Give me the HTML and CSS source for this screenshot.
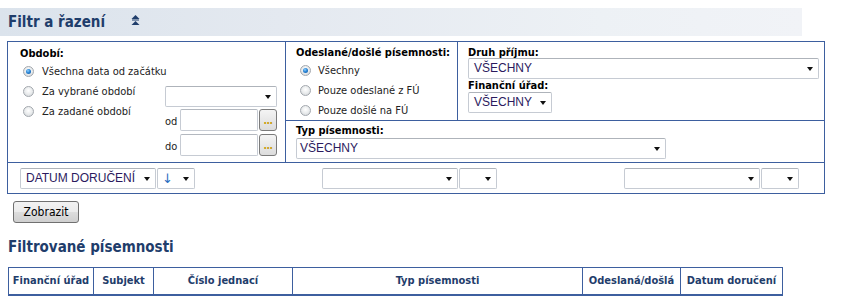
FILE: index.html
```html
<!DOCTYPE html>
<html lang="cs">
<head>
<meta charset="utf-8">
<title>Filtr a řazení</title>
<link rel="stylesheet" href="styles.css">
</head>
<body>
<div class="hdr">
  <span class="hdr-title">Filtr a řazení</span>
  <svg class="hdr-icon" width="9" height="11" viewBox="0 0 9 11"><polygon points="0.5,4 4.5,0 8.5,4" fill="#1f3d6b"/><rect x="1" y="4.5" width="7" height="1" fill="#1f3d6b"/><polygon points="0.5,10 4.5,6 8.5,10" fill="#1f3d6b"/></svg>
</div>

<div class="filter">
  <div class="c-period">
    <div class="lbl">Období:</div>
    <div class="period-body">
      <div class="radios">
        <div class="rrow"><span class="radio on"></span><span>Všechna data od začátku</span></div>
        <div class="rrow"><span class="radio"></span><span>Za vybrané období</span></div>
        <div class="rrow"><span class="radio"></span><span>Za zadané období</span></div>
      </div>
      <div class="period-ctrls">
        <div class="sel sel-period"><span class="sel-t"></span><i class="arr"></i></div>
        <div class="dt dt-od"><span class="dt-l">od</span><span class="inp"></span><span class="dots">...</span></div>
        <div class="dt dt-do"><span class="dt-l">do</span><span class="inp"></span><span class="dots">...</span></div>
      </div>
    </div>
  </div>

  <div class="c-dir">
    <div class="lbl">Odeslané/došlé písemnosti:</div>
    <div class="rrow r2"><span class="radio on"></span><span>Všechny</span></div>
    <div class="rrow r2"><span class="radio"></span><span>Pouze odeslané z FÚ</span></div>
    <div class="rrow r2"><span class="radio"></span><span>Pouze došlé na FÚ</span></div>
  </div>

  <div class="c-right">
    <div class="lbl lbl-s">Druh příjmu:</div>
    <div class="sel sel-druh"><span class="sel-t">VŠECHNY</span><i class="arr"></i></div>
    <div class="lbl lbl-s lbl-fu">Finanční úřad:</div>
    <div class="sel sel-fu"><span class="sel-t">VŠECHNY</span><i class="arr"></i></div>
  </div>

  <div class="c-typ">
    <div class="lbl lbl-s">Typ písemnosti:</div>
    <div class="sel sel-typ"><span class="sel-t">VŠECHNY</span><i class="arr"></i></div>
  </div>

  <div class="c-sort">
    <div class="sgroup">
      <div class="sel sel-field"><span class="sel-t">DATUM DORUČENÍ</span><i class="arr"></i></div>
      <div class="sel sel-dir"><span class="sel-t dir-t">↓</span><i class="arr"></i></div>
    </div>
    <div class="sgroup">
      <div class="sel sel-field"><span class="sel-t"></span><i class="arr"></i></div>
      <div class="sel sel-dir"><span class="sel-t"></span><i class="arr"></i></div>
    </div>
    <div class="sgroup">
      <div class="sel sel-field"><span class="sel-t"></span><i class="arr"></i></div>
      <div class="sel sel-dir"><span class="sel-t"></span><i class="arr"></i></div>
    </div>
  </div>
</div>

<button class="btn" type="button">Zobrazit</button>

<h2 class="sec">Filtrované písemnosti</h2>

<table class="grid">
  <colgroup>
    <col class="w1"><col class="w2"><col class="w3"><col class="w4"><col class="w5"><col class="w6">
  </colgroup>
  <thead>
    <tr><th>Finanční úřad</th><th>Subjekt</th><th>Číslo jednací</th><th>Typ písemnosti</th><th>Odeslaná/došlá</th><th>Datum doručení</th></tr>
  </thead>
  <tbody>
    <tr><td></td><td></td><td></td><td></td><td></td><td></td></tr>
  </tbody>
</table>
</body>
</html>
```

FILE: styles.css
```css
* { box-sizing: border-box; }
html, body { margin: 0; padding: 0; background: #fff; }
body {
  font-family: "DejaVu Sans Condensed", "DejaVu Sans", sans-serif;
  font-size: 11px;
  color: #1a1a1a;
  overflow: hidden;
}

/* header bar */
.hdr {
  margin-top: 8px;
  width: 802px;
  height: 28px;
  display: flex;
  align-items: center;
  background: linear-gradient(to right, #dbe3ec 0%, #e4e9f0 35%, #edf1f5 75%, #f1f3f7 100%);
}
.hdr-title {
  width: 131px;
  padding-left: 8px;
  font-size: 15px;
  font-weight: bold;
  color: #1f3d6b;
  line-height: 28px;
  white-space: nowrap;
}
.hdr-icon { display: block; margin-top: -3px; }

/* filter box */
.filter {
  margin: 5px 0 0 7px;
  width: 818px;
  border: 1px solid #3d5f9f;
  display: grid;
  grid-template-columns: 278px 172px 366px;
  grid-template-rows: 79px 41px 31px;
}
.c-period {
  grid-row: 1 / 3;
  grid-column: 1;
  border-right: 1px solid #3d5f9f;
  padding: 5px 0 0 12px;
}
.c-dir {
  grid-row: 1;
  grid-column: 2;
  border-right: 1px solid #3d5f9f;
  border-bottom: 1px solid #3d5f9f;
  padding: 4px 0 0 10px;
}
.c-right {
  grid-row: 1;
  grid-column: 3;
  border-bottom: 1px solid #3d5f9f;
  padding: 5px 0 0 10px;
}
.c-typ {
  grid-row: 2;
  grid-column: 2 / 4;
  padding: 4px 0 0 10px;
}
.c-sort {
  grid-row: 3;
  grid-column: 1 / 4;
  border-top: 1px solid #3d5f9f;
  padding: 5px 0 0 12px;
  display: flex;
  gap: 127px;
}

.lbl {
  font-weight: bold;
  color: #000;
  line-height: 14px;
  white-space: nowrap;
}
.lbl-s { line-height: 12px; }
.lbl-fu { margin-top: 1px; }

/* radios */
.period-body { display: flex; }
.radios { width: 145px; }
.rrow {
  height: 20px;
  display: flex;
  align-items: center;
  padding-left: 3px;
  gap: 8px;
  color: #222;
  white-space: nowrap;
}
.rrow.r2 { padding-left: 4px; gap: 7px; }
.radio {
  flex: none;
  width: 11px;
  height: 11px;
  border-radius: 50%;
  border: 1px solid #a3a8ae;
  background: radial-gradient(circle at 50% 40%, #ffffff 0%, #eceeef 45%, #cfd3d7 100%);
  position: relative;
}
.radio.on::after {
  content: "";
  position: absolute;
  left: 2px;
  top: 2px;
  width: 5px;
  height: 5px;
  border-radius: 50%;
  background: radial-gradient(circle at 40% 35%, #8fd0ff 0%, #2a86d6 45%, #0d4f9c 100%);
}

/* selects */
.sel {
  position: relative;
  height: 21px;
  border: 1px solid #c6cbd3;
  border-top-color: #aeb3ba;
  border-radius: 2px;
  background: #fff;
  font-family: "Liberation Sans", Arial, sans-serif;
  font-size: 12px;
  color: #2b1a5e;
}
.sel-t {
  display: block;
  padding-left: 5px;
  line-height: 19px;
  white-space: nowrap;
}
.arr {
  position: absolute;
  right: 5px;
  top: 8px;
  width: 0;
  height: 0;
  border-left: 3.5px solid transparent;
  border-right: 3.5px solid transparent;
  border-top: 4px solid #111;
}
.sel-period { width: 112px; margin-top: 25px; }
.sel-druh { width: 351px; margin-top: -1px; }
.sel-fu { width: 84px; }
.sel-typ { width: 370px; margin-top: 1px; }
.sel-typ .sel-t { padding-left: 3px; }
.sgroup { display: flex; gap: 1px; }
.sel-field { width: 136px; }
.sel-dir { width: 38px; }
.dir-t {
  color: #2a6cc0;
  padding-left: 4px;
  font-family: "DejaVu Sans", sans-serif;
  font-size: 13px;
  line-height: 20px;
}

/* date inputs */
.dt { display: flex; height: 22px; }
.dt-od { margin-top: 2px; }
.dt-do { margin-top: 3px; }
.dt-l {
  width: 15px;
  align-self: flex-end;
  line-height: 18px;
  color: #222;
}
.inp {
  width: 78px;
  height: 22px;
  border: 1px solid #c6cbd3;
  border-top-color: #b3b8bf;
  border-radius: 2px;
  background: #fff;
}
.dots {
  width: 18px;
  height: 22px;
  margin-left: 1px;
  border: 1px solid #7b7b7b;
  border-radius: 3px;
  background: linear-gradient(#f4f4f4, #dcdcdc);
  color: #c89b00;
  font-size: 10px;
  font-weight: bold;
  line-height: 22px;
  text-align: center;
  letter-spacing: -0.5px;
}

/* button */
.btn {
  display: block;
  margin: 7px 0 0 13px;
  width: 66px;
  height: 22px;
  padding: 0;
  border: 1px solid #707070;
  border-radius: 3px;
  background: linear-gradient(#f2f2f2 0%, #ebebeb 50%, #dddddd 51%, #cfcfcf 100%);
  font-family: "DejaVu Sans Condensed", "DejaVu Sans", sans-serif;
  font-size: 12px;
  color: #000;
}

/* heading */
.sec {
  margin: 14px 0 0 8px;
  font-size: 15px;
  font-weight: bold;
  line-height: 20px;
  color: #1f3d6b;
}

/* table */
.grid {
  margin: 10px 0 0 8px;
  width: 774px;
  table-layout: fixed;
  border-collapse: collapse;
}
.grid .w1 { width: 85px; }
.grid .w2 { width: 60px; }
.grid .w3 { width: 139px; }
.grid .w4 { width: 290px; }
.grid .w5 { width: 98px; }
.grid .w6 { width: 102px; }
.grid th {
  height: 27px;
  border: 1px solid #3d5f9f;
  border-bottom: 2px solid #3d5f9f;
  font-size: 11px;
  font-weight: bold;
  color: #1f3d6b;
  text-align: center;
  white-space: nowrap;
  padding: 0;
}
.grid td {
  height: 24px;
  border: 1px solid #3d5f9f;
}
```
